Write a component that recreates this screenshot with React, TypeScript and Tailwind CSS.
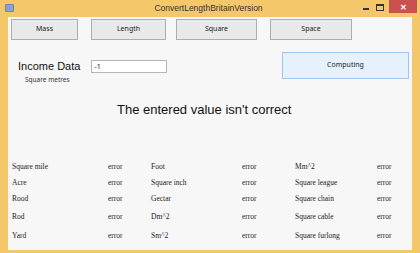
import React from "react";

const rows: [string, string, string, string, string, string, number][] = [
  ["Square mile", "error", "Foot", "error", "Mm^2", "error", 17],
  ["Acre", "error", "Square inch", "error", "Square league", "error", 15],
  ["Rood", "error", "Gectar", "error", "Square chain", "error", 17],
  ["Rod", "error", "Dm^2", "error", "Square cable", "error", 19],
  ["Yard", "error", "Sm^2", "error", "Square furlong", "error", 19],
];

const btn =
  "h-[21px] flex items-center justify-center bg-[#e9e9e9] border border-[#adadad] text-[7px] text-[#222]";

export default function App() {
  return (
    <div
      className="w-[420px] h-[253px] bg-[#f4c86a] flex flex-col overflow-hidden"
      style={{ fontFamily: '"Noto Sans", "Open Sans", sans-serif' }}
    >
      {/* title bar */}
      <div className="h-[17px] flex items-start relative shrink-0">
        <div className="w-[9px] h-[8px] ml-[5px] mt-[4px] bg-[#8aa3c8] rounded-[1px] border border-[#6a84ac]" />
        <div
          className="flex-1 flex justify-center pl-[44px] pt-[1px] text-[8.5px] text-[#333] leading-[14px]"
          style={{ fontFamily: '"Liberation Sans", Arial, sans-serif' }}
        >
          ConvertLengthBritainVersion
        </div>
        <div className="flex items-start h-[14px]">
          <div className="w-[14px] h-[14px] flex items-center justify-center">
            <div className="w-[6px] h-[2px] bg-[#333] mt-[4px]" />
          </div>
          <div className="w-[14px] h-[14px] flex items-center justify-center">
            <div className="w-[8px] h-[7px] border border-[#333] border-t-2" />
          </div>
          <div className="w-[28px] h-[13px] ml-[2px] mr-[3px] bg-[#c9514f] flex items-center justify-center text-white text-[8px] font-bold leading-none">
            ✕
          </div>
        </div>
      </div>
      {/* client */}
      <div className="flex-1 mx-[8px] mb-[3px] bg-[#f7f7f7] flex flex-col">
        <div className="flex pt-[2px] pl-[3px]">
          <div className={btn + " w-[67px]"}>Mass</div>
          <div className={btn + " w-[75px] ml-[13px]"}>Length</div>
          <div className={btn + " w-[81px] ml-[10px]"}>Square</div>
          <div className={btn + " w-[82px] ml-[13px]"}>Space</div>
        </div>
        <div className="flex mt-[12px]">
          <div className="flex flex-col">
            <div className="flex items-center mt-[8px]">
              <div
                className="ml-[10px] text-[11px] text-[#111] leading-[13px]"
                style={{ fontFamily: '"Liberation Sans", Arial, sans-serif' }}
              >
                Income Data
              </div>
              <div className="ml-[11px] w-[76px] h-[13px] bg-white border border-[#b5b5b5] text-[7px] leading-[11px] pl-[2px] text-[#111]">
                -1
              </div>
            </div>
            <div className="ml-[17px] mt-[3px] text-[6.5px] text-[#333] leading-[8px]">
              Square metres
            </div>
          </div>
          <div className="ml-auto mr-[3px] w-[127px] h-[27px] bg-[#e5f1fb] border border-[#9fc6ec] flex items-center justify-center text-[7px] text-[#222]">
            Computing
          </div>
        </div>
        <div
          className="mt-[18px] pl-[109px] text-[13px] text-[#111] leading-[15px]"
          style={{ fontFamily: '"Liberation Sans", Arial, sans-serif' }}
        >
          The entered value isn't correct
        </div>
        <div
          className="mt-[41px] flex flex-col text-[7.5px] text-[#222]"
          style={{ fontFamily: '"Liberation Serif", "Times New Roman", serif' }}
        >
          {rows.map((r, i) => (
            <div key={i} className="flex items-center" style={{ height: r[6] }}>
              <div className="w-[100px] pl-[4px] shrink-0">{r[0]}</div>
              <div className="w-[43px] shrink-0">{r[1]}</div>
              <div className="w-[91px] shrink-0">{r[2]}</div>
              <div className="w-[53px] shrink-0">{r[3]}</div>
              <div className="w-[82px] shrink-0">{r[4]}</div>
              <div className="shrink-0">{r[5]}</div>
            </div>
          ))}
        </div>
      </div>
    </div>
  );
}
